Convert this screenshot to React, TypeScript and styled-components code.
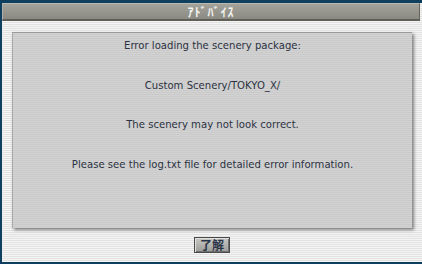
import React from 'react';
import styled, { createGlobalStyle } from 'styled-components';

const GlobalStyle = createGlobalStyle`
  html, body {
    margin: 0;
    padding: 0;
    background: #0f3f5e;
  }
  body {
    font-family: "DejaVu Sans", sans-serif;
  }
`;

const Frame = styled.div`
  width: 422px;
  height: 264px;
  box-sizing: border-box;
  border-top: 3px solid #0f3f5e;
  border-left: 2px solid #0f3f5e;
  border-bottom: 2px solid #0f3f5e;
  display: flex;
  flex-direction: column;
  background: repeating-linear-gradient(
    to bottom,
    #f4f4f4 0px,
    #f4f4f4 1px,
    #e2e2e2 1px,
    #e2e2e2 2px
  );
`;

const TitleBar = styled.div`
  height: 18px;
  margin-right: 2px;
  box-sizing: border-box;
  border-top: 1px solid #b8b8b0;
  border-left: 1px solid #b0b0a8;
  border-right: 1px solid #66665f;
  border-bottom: 2px solid #5f5f58;
  background: linear-gradient(to bottom, #a3a39b, #8a8a82);
  display: flex;
  align-items: center;
  justify-content: center;
  color: #f4f4f0;
  font-size: 12px;
  font-weight: bold;
  font-family: "Noto Sans CJK JP", sans-serif;
  letter-spacing: 1px;
`;

const Body = styled.div`
  flex: 1;
  display: flex;
  flex-direction: column;
  align-items: center;
  padding: 11px 10px 0 10px;
`;

const Panel = styled.div`
  width: 400px;
  height: 196px;
  box-sizing: border-box;
  border-top: 1px solid #9a9a9a;
  border-left: 1px solid #a8a8a8;
  background: repeating-linear-gradient(
    to bottom,
    #d2d2d2 0px,
    #d2d2d2 1px,
    #cacaca 1px,
    #cacaca 2px
  );
  box-shadow: 2px 2px 3px rgba(0, 0, 0, 0.45);
  display: flex;
  flex-direction: column;
  align-items: center;
  padding-top: 6px;
`;

const Line = styled.div<{ $mt: number }>`
  margin-top: ${(p) => p.$mt}px;
  color: #2c3242;
  font-size: 10.1px;
  line-height: 14px;
  white-space: nowrap;
`;

const Button = styled.button`
  margin-top: 9px;
  width: 36px;
  height: 16px;
  padding: 0;
  box-sizing: border-box;
  border: 1px solid #4a4a4a;
  background: linear-gradient(to bottom, #c8c8c4, #9c9c98);
  box-shadow: inset 1px 1px 0 #e0e0dc, inset -1px -1px 0 #707070;
  color: #2a3448;
  font-family: "Noto Sans CJK JP", sans-serif;
  font-size: 12px;
  font-weight: bold;
  line-height: 14px;
  display: flex;
  align-items: center;
  justify-content: center;
`;

const lines = [
  { text: 'Error loading the scenery package:', mt: 0 },
  { text: 'Custom Scenery/TOKYO_X/', mt: 26 },
  { text: 'The scenery may not look correct.', mt: 25 },
  { text: 'Please see the log.txt file for detailed error information.', mt: 26 },
];

export default function App() {
  return (
    <>
      <GlobalStyle />
      <Frame>
        <TitleBar>ｱﾄﾞﾊﾞｲｽ</TitleBar>
        <Body>
          <Panel>
            {lines.map((l) => (
              <Line key={l.text} $mt={l.mt}>
                {l.text}
              </Line>
            ))}
          </Panel>
          <Button>了解</Button>
        </Body>
      </Frame>
    </>
  );
}
